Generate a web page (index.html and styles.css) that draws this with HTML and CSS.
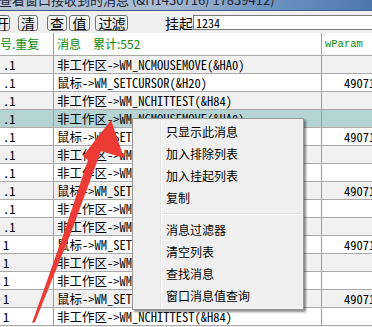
FILE: index.html
```html
<!DOCTYPE html>
<html lang="zh-CN">
<head>
<meta charset="utf-8">
<title>查看窗口接收到的消息</title>
<link rel="stylesheet" href="styles.css">
</head>
<body>
<div class="window">
  <div class="titlebar"><span class="title">查看窗口接收到的消息 (&amp;H1430716) 17839412)</span></div>
  <div class="toolbar">
    <button class="btn btn-cut">开</button>
    <button class="btn btn-clear">清</button>
    <button class="btn btn-find">查</button>
    <button class="btn btn-val">值</button>
    <button class="btn btn-filter">过滤</button>
    <span class="label">挂起</span>
    <input class="hang" type="text" value="1234">
  </div>
  <div class="grid">
    <div class="row head"><div class="c1">号.重复</div><div class="c2">消息　累计:552</div><div class="c3 mono-h">wParam</div></div>
    <div class="row alt"><div class="c1">.1</div><div class="c2">非工作区-&gt;WM_NCMOUSEMOVE(&amp;HA0)</div><div class="c3"></div></div>
    <div class="row"><div class="c1">.1</div><div class="c2">鼠标-&gt;WM_SETCURSOR(&amp;H20)</div><div class="c3">490710</div></div>
    <div class="row alt"><div class="c1">.1</div><div class="c2">非工作区-&gt;WM_NCHITTEST(&amp;H84)</div><div class="c3"></div></div>
    <div class="row sel"><div class="c1">.1</div><div class="c2">非工作区-&gt;WM_NCMOUSEMOVE(&amp;HA0)</div><div class="c3"></div></div>
    <div class="row"><div class="c1">.1</div><div class="c2">鼠标-&gt;WM_SETCURSOR(&amp;H20)</div><div class="c3">490710</div></div>
    <div class="row alt"><div class="c1">.1</div><div class="c2">非工作区-&gt;WM_NCHITTEST(&amp;H84)</div><div class="c3"></div></div>
    <div class="row"><div class="c1">.1</div><div class="c2">非工作区-&gt;WM_NCMOUSEMOVE(&amp;HA0)</div><div class="c3"></div></div>
    <div class="row alt"><div class="c1">.1</div><div class="c2">鼠标-&gt;WM_SETCURSOR(&amp;H20)</div><div class="c3">490710</div></div>
    <div class="row"><div class="c1">.1</div><div class="c2">非工作区-&gt;WM_NCHITTEST(&amp;H84)</div><div class="c3"></div></div>
    <div class="row alt"><div class="c1">.1</div><div class="c2">非工作区-&gt;WM_NCMOUSEMOVE(&amp;HA0)</div><div class="c3"></div></div>
    <div class="row"><div class="c1">1</div><div class="c2">鼠标-&gt;WM_SETCURSOR(&amp;H20)</div><div class="c3">490710</div></div>
    <div class="row alt"><div class="c1">1</div><div class="c2">非工作区-&gt;WM_NCHITTEST(&amp;H84)</div><div class="c3"></div></div>
    <div class="row"><div class="c1">1</div><div class="c2">非工作区-&gt;WM_NCMOUSEMOVE(&amp;HA0)</div><div class="c3"></div></div>
    <div class="row alt"><div class="c1">1</div><div class="c2">鼠标-&gt;WM_SETCURSOR(&amp;H20)</div><div class="c3">490710</div></div>
    <div class="row"><div class="c1">1</div><div class="c2">非工作区-&gt;WM_NCHITTEST(&amp;H84)</div><div class="c3"></div></div>
  </div>

  <ul class="menu">
    <li class="item">只显示此消息</li>
    <li class="item">加入排除列表</li>
    <li class="item">加入挂起列表</li>
    <li class="item">复制</li>
    <li class="sep"></li>
    <li class="item">消息过滤器</li>
    <li class="item">清空列表</li>
    <li class="item">查找消息</li>
    <li class="item">窗口消息值查询</li>
  </ul>

  <svg class="arrow" width="372" height="327" viewBox="0 0 372 327">
    <polygon fill="#ec3b35" points="111,120 124,158 101,151 72,230 35,322 32,323 65,230 88,160 83,156"/>
  </svg>
</div>
</body>
</html>
```

FILE: styles.css
```css
html, body {
  margin: 0;
  padding: 0;
}
body {
  width: 372px;
  height: 327px;
  overflow: hidden;
  background: #f0f0f0;
  font-family: "Noto Sans CJK SC", "Liberation Sans", sans-serif;
}
.window {
  position: relative;
  width: 372px;
  height: 327px;
  overflow: hidden;
}
.titlebar {
  height: 10px;
  overflow: hidden;
  background: linear-gradient(to right, #b8c7d8 0%, #a7bbd2 45%, #6f95c2 70%, #4d78b0 100%);
  border-bottom: 1px solid #3e5f8c;
}
.title {
  display: block;
  margin-top: -9px;
  margin-left: -1px;
  font-size: 13px;
  line-height: 17px;
  color: #1c2433;
  white-space: nowrap;
}
.toolbar {
  height: 22px;
  display: flex;
  align-items: flex-start;
  padding-top: 4px;
  box-sizing: border-box;
  background: #f0f0f0;
  white-space: nowrap;
}
.btn {
  flex: none;
  height: 16px;
  padding: 0;
  margin: 0;
  border: 1px solid #6f6f6f;
  border-radius: 3px;
  background: linear-gradient(#f8f8f8, #e2e2e2);
  box-shadow: inset 0 0 0 1px #ffffff;
  font-family: "Noto Sans CJK SC", sans-serif;
  font-size: 14px;
  line-height: 13px;
  color: #000;
  display: flex;
  align-items: center;
  justify-content: center;
}
.btn-cut { width: 20px; margin-left: -10px; justify-content: flex-end; }
.btn-clear { width: 20px; margin-left: 8px; }
.btn-find { width: 20px; margin-left: 9px; }
.btn-val { width: 21px; margin-left: 2px; }
.btn-filter { width: 33px; margin-left: 5px; letter-spacing: -1px; }
.label {
  flex: none;
  margin-left: 37px;
  font-size: 14px;
  line-height: 16px;
  width: 28px;
  white-space: nowrap;
  color: #000;
}
.hang {
  flex: none;
  width: 190px;
  height: 15px;
  box-sizing: border-box;
  margin: 0;
  padding: 0 0 0 2px;
  border: 1px solid #7a7a7a;
  background: #fff;
  font-family: "Noto Sans Mono CJK SC", "Liberation Mono", monospace;
  font-size: 12px;
  line-height: 13px;
  color: #000;
  outline: none;
}
.grid {
  background: #fff;
}
.row {
  display: flex;
  height: 18px;
  box-sizing: border-box;
  border-bottom: 1px solid #aaaaaa;
  background: #ffffff;
  font-family: "Noto Sans Mono CJK SC", "Liberation Mono", "Noto Sans CJK SC", monospace;
  font-size: 12.5px;
  line-height: 17px;
  color: #000;
  white-space: nowrap;
}
.row.alt { background: #f1f1f1; }
.row.sel { background: #b5d3d3; }
.row.head {
  height: 23px;
  background: #ffffff;
  font-family: "Noto Sans CJK SC", sans-serif;
  font-size: 12px;
  line-height: 22px;
  color: #0e8a0e;
}
.c1 {
  width: 54px;
  flex: none;
  border-right: 1px solid #9c9c9c;
  padding-left: 3px;
  box-sizing: border-box;
  overflow: hidden;
}
.head .c1 { padding-left: 0; }
.c2 {
  width: 268px;
  flex: none;
  border-right: 1px solid #9c9c9c;
  padding-left: 3px;
  box-sizing: border-box;
  overflow: hidden;
}
.c3 {
  flex: 1;
  padding-left: 22px;
  overflow: hidden;
}
.head .c3 {
  padding-left: 3px;
  font-family: "Liberation Mono", monospace;
  font-size: 10.5px;
}
.menu {
  position: absolute;
  left: 132px;
  top: 118px;
  width: 172px;
  box-sizing: border-box;
  margin: 0;
  padding: 2px 0;
  list-style: none;
  background: #f0f0f0;
  border: 1px solid #979797;
  box-shadow: 2px 2px 2px rgba(0, 0, 0, 0.45);
  font-family: "Noto Sans CJK SC", sans-serif;
  font-size: 12px;
  color: #000;
}
.menu::before {
  content: "";
  position: absolute;
  top: 2px;
  bottom: 2px;
  left: 27px;
  width: 2px;
  background: linear-gradient(to right, #e2e3e3 50%, #ffffff 50%);
}
.item {
  height: 22px;
  line-height: 22px;
  padding-left: 33px;
}
.sep {
  height: 10px;
  margin-left: 29px;
  position: relative;
}
.sep::after {
  content: "";
  position: absolute;
  left: 0;
  right: 1px;
  top: 4px;
  height: 1px;
  background: #e0e0e0;
  border-bottom: 1px solid #ffffff;
}
.arrow {
  position: absolute;
  left: 0;
  top: 0;
  pointer-events: none;
}
```
